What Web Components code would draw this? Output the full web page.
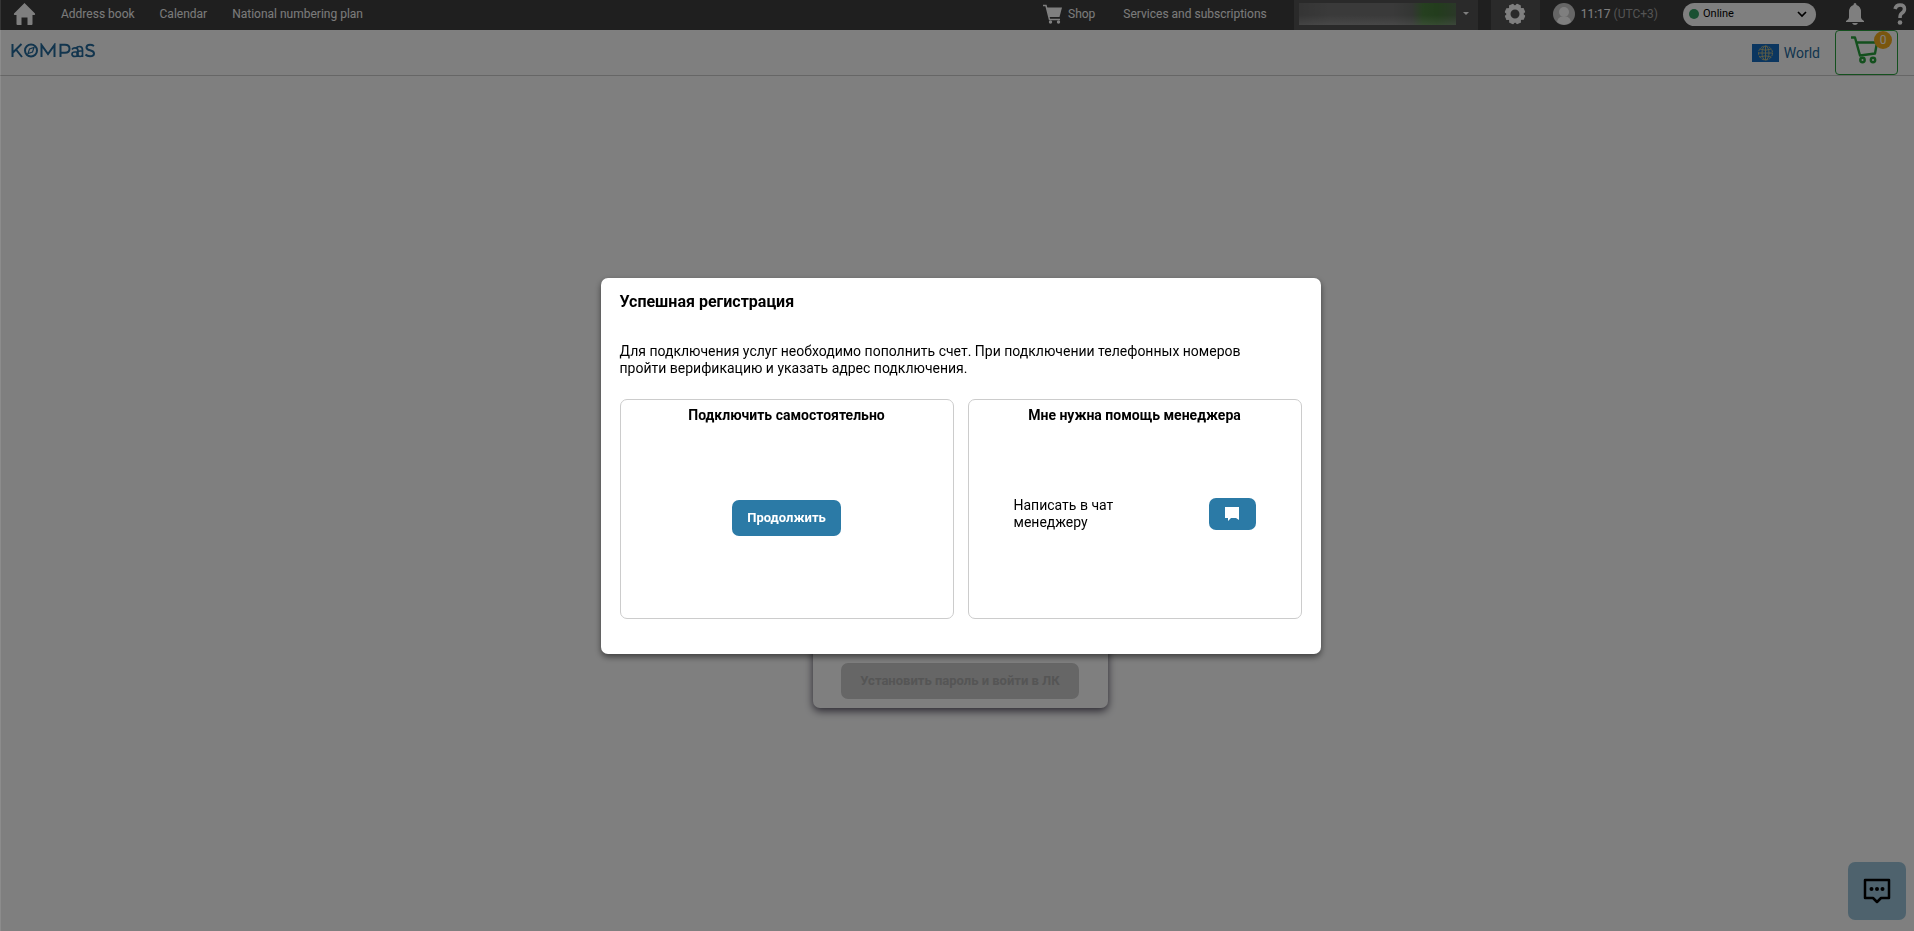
<!DOCTYPE html>
<html lang="ru">
<head>
<meta charset="utf-8">
<title>KOMPaaS</title>
<style>
    html, body { height: 100%; }

    body {
        margin: 0;
        background: #fff;
        font-family: Roboto, "Liberation Sans", sans-serif;
        font-size: 14px;
        color: #000;
        overflow: hidden;
    }
</style>
</head>
<body>
<kompaas-app></kompaas-app>

<script>
// Dark bar on top: links, account, status
class TopBar extends HTMLElement {
    constructor() {
        super();
        this.attachShadow({ mode: 'open' });
    }

    connectedCallback() {
        this.shadowRoot.innerHTML = `
            <style>
                :host {
                    display: flex;
                    justify-content: space-between;
                    height: 30px;
                    background: #3e3e3e;
                    color: #fff;
                    font-size: 12px;
                    line-height: 28px;
                }

                nav, .tools { display: flex; align-items: center; padding-bottom: 2px; }
                nav { padding-left: 13px; gap: 25px; }
                nav a:first-child { display: flex; }
                a { color: #f6f6f6; text-decoration: none; }
                svg { display: block; }

                .shop { display: flex; align-items: center; gap: 5px; margin-right: 28px; }
                .services { margin-right: 27px; }

                button {
                    border: 0;
                    padding: 0;
                    background: none;
                    color: #fff;
                    font: inherit;
                }

                .account, .settings {
                    display: flex;
                    align-items: center;
                    align-self: flex-start;
                    height: 30px;
                    margin-right: 13px;
                    background: #555;
                    box-sizing: border-box;
                }

                .account { gap: 7px; width: 184px; padding: 0 5px 2px; }
                .settings { justify-content: center; width: 49px; padding-bottom: 2px; }

                .balance {
                    width: 157px;
                    height: 22px;
                    background:
                        linear-gradient(0deg, rgba(255, 255, 255, .2), rgba(255, 255, 255, 0) 45%),
                        linear-gradient(90deg, #6a6a6a 0%, #757575 20%, #747474 60%, #686c68 72%, #4c8040 79%, #467a3a 88%, #557050 100%);
                }

                .user { display: flex; align-items: center; gap: 6px; margin-right: 25px; }
                .time span { color: #a8a8a8; }

                .status {
                    display: flex;
                    align-items: center;
                    gap: 4px;
                    width: 133px;
                    height: 23px;
                    padding: 0 9px 0 6px;
                    margin-right: 30px;
                    border-radius: 12px;
                    background: #fff;
                    box-sizing: border-box;
                }

                .dot { width: 10px; height: 10px; border-radius: 50%; background: #34a065; }

                select {
                    flex: 1;
                    appearance: none;
                    border: 0;
                    padding: 0;
                    background: none;
                    color: #000;
                    font: inherit;
                    font-size: 11px;
                }

                .bell { margin-right: 28px; }
            </style>

            <nav>
                <a href="#" aria-label="Home">
                    <svg width="23" height="24" viewBox="0 0 23 24" fill="#fff"><path d="M11.500 1 1 11.500Q.3 13 2 13H3.500V22Q3.500 23 4.500 23H8.500V15.500H14.500V23H18.500Q19.500 23 19.500 22V13H21Q22.700 13 22 11.500Z"/></svg>
                </a>
                <a href="#">Address book</a>
                <a href="#">Calendar</a>
                <a href="#">National numbering plan</a>
            </nav>
            <div class="tools">
                <a class="shop" href="#">
                    <svg width="21" height="20" viewBox="0 0 21 20"><path d="M1 1.500H4L7.500 15.500H18" fill="none" stroke="#fff" stroke-width="1.500"/><path d="M4.500 3.500H20L17.500 13H7Z" fill="#fff"/><circle cx="8.500" cy="18" r="1.700" fill="#fff"/><circle cx="16.500" cy="18" r="1.700" fill="#fff"/></svg>
                    Shop
                </a>
                <a class="services" href="#">Services and subscriptions</a>
                <button class="account" aria-label="Account">
                    <span class="balance"></span>
                    <svg width="6" height="4" viewBox="0 0 6 4"><path d="M0 0H6L3 3Z" fill="#fff"/></svg>
                </button>
                <button class="settings" aria-label="Settings">
                    <svg width="22" height="22" viewBox="-11 -11 22 22">
                        <g fill="#fff" stroke="#fff" stroke-linejoin="round" transform="rotate(22)">
                            <path d="M-2.800-7-1.800-9.700H1.800L2.800-7Z"/>
                            <path transform="rotate(45)" d="M-2.800-7-1.800-9.700H1.800L2.800-7Z"/>
                            <path transform="rotate(90)" d="M-2.800-7-1.800-9.700H1.800L2.800-7Z"/>
                            <path transform="rotate(135)" d="M-2.800-7-1.800-9.700H1.800L2.800-7Z"/>
                            <path transform="rotate(180)" d="M-2.800-7-1.800-9.700H1.800L2.800-7Z"/>
                            <path transform="rotate(225)" d="M-2.800-7-1.800-9.700H1.800L2.800-7Z"/>
                            <path transform="rotate(270)" d="M-2.800-7-1.800-9.700H1.800L2.800-7Z"/>
                            <path transform="rotate(315)" d="M-2.800-7-1.800-9.700H1.800L2.800-7Z"/>
                        </g>
                        <circle r="6.500" fill="none" stroke="#fff" stroke-width="4"/>
                    </svg>
                </button>
                <div class="user">
                    <svg width="22" height="22" viewBox="0 0 22 22"><circle cx="11" cy="11" r="11" fill="#ccc"/><circle cx="11" cy="9" r="5" fill="#fff"/><path d="M4 19Q5 14 9 13.500H13Q17 14 18 19Q11 24.500 4 19Z" fill="#fff"/></svg>
                    <div class="time">11:17 <span>(UTC+3)</span></div>
                </div>
                <label class="status">
                    <span class="dot"></span>
                    <select aria-label="Status"><option>Online</option></select>
                    <svg width="10" height="7" viewBox="0 0 10 7"><path d="M1 1 5 5 9 1" fill="none" stroke="#000" stroke-width="1.700"/></svg>
                </label>
                <button class="bell" aria-label="Notifications">
                    <svg width="18" height="22" viewBox="0 0 18 22" fill="#fff"><path d="M9 0Q10.500 0 10.500 2Q15 3.500 15 9V14.500Q15 16 18 18V19H0V18Q3 16 3 14.500V9Q3 3.500 7.500 2Q7.500 0 9 0ZM6 20H12Q11 22 9 22Q7 22 6 20Z"/></svg>
                </button>
                <button class="help" aria-label="Help">
                    <svg width="22" height="22" viewBox="0 0 22 22"><path d="M3 6Q4 2 8 2Q12.500 2 12.500 6Q12.500 8.500 9.500 10.500Q8 11.500 8 15" fill="none" stroke="#fff" stroke-width="3.500"/><circle cx="8" cy="19.500" r="2.300" fill="#fff"/></svg>
                </button>
            </div>
        `;
    }
}

// White header with the logo, region and cart
class SiteHeader extends HTMLElement {
    constructor() {
        super();
        this.attachShadow({ mode: 'open' });
    }

    connectedCallback() {
        this.shadowRoot.innerHTML = `
            <style>
                :host {
                    display: flex;
                    justify-content: space-between;
                    height: 45px;
                    padding: 0 16px 0 11px;
                    border-bottom: 1px solid #ccc;
                    color: #256a9c;
                }

                a { color: inherit; text-decoration: none; }
                svg { display: block; }
                .logo { padding-top: 13px; }
                .side { display: flex; gap: 15px; }

                .region {
                    display: flex;
                    align-items: center;
                    gap: 5px;
                    font-size: 14px;
                }

                .cart {
                    position: relative;
                    display: flex;
                    align-items: flex-start;
                    width: 63px;
                    height: 45px;
                    padding: 5px 0 0 15px;
                    border: 1px solid #28a03c;
                    border-radius: 4px;
                    background: none;
                    box-sizing: border-box;
                }

                .badge {
                    position: absolute;
                    top: 0;
                    right: 5px;
                    width: 18px;
                    height: 18px;
                    border-radius: 50%;
                    background: #f5ad1c;
                    color: #fff;
                    font: 12px/18px Roboto, "Liberation Sans", sans-serif;
                    text-align: center;
                }
            </style>

            <a class="logo" href="#" aria-label="KOMPaaS">
                <svg width="85" height="16" viewBox="0 0 85 16" fill="none" stroke="#256a9c" stroke-width="2">
                    <path d="M1.500 1V14M10.500 1 2 9.500M5 6.500 11 14"/>
                    <circle cx="20" cy="7.500" r="6"/>
                    <path d="M23 4.500 21.500 9 17 10.500 18.500 6Z" stroke-width="1.200"/>
                    <path d="M30.500 14V2L37 11 43.500 2V14"/>
                    <path d="M49.500 14V1.800H54Q58.500 1.800 58.500 5.800T54 9.800H49.500"/>
                    <path d="M61 6.500Q62 4.800 64 4.800Q67 4.800 67 8V14M67 9H64Q61 9 61 11.200T64 13.500Q66 13.500 67 12M65 5.500Q66 3.500 68.500 3.500Q71.500 3.500 71.500 7V14M71 8H69Q66 8 66 10.500T69 13.500Q71 13.500 71.500 12" stroke-width="1.700"/>
                    <path d="M83 3Q81 1.700 79 1.700Q75.500 1.700 75.500 4.500Q75.500 6.500 79 7.300Q83 8.200 83 10.500Q83 13.300 79 13.300Q76 13.300 74.500 11.500"/>
                </svg>
            </a>
            <div class="side">
                <a class="region" href="#">
                    <svg width="27" height="18" viewBox="0 0 27 18"><path d="M0 0H27V18H0Z" fill="#166cc0"/><g fill="none" stroke="#b9b98a"><circle cx="13.500" cy="9" r="7" stroke-dasharray="3 1"/><ellipse cx="13.500" cy="9" rx="3.500" ry="7"/><path d="M13.500 2V16M6.500 9H20.500M8 5Q13.500 7.500 19 5M8 13Q13.500 10.500 19 13"/></g></svg>
                    World
                </a>
                <button class="cart" aria-label="Cart">
                    <svg width="28" height="28" viewBox="0 0 28 28" fill="none" stroke="#28a03c" stroke-width="2.400"><path d="M0 1.500H4L9 19.500 24 17.500 26 6.500H5.500" stroke-linejoin="round"/><circle cx="11.500" cy="24" r="2.200"/><circle cx="22" cy="24" r="2.200"/></svg>
                    <span class="badge">0</span>
                </button>
            </div>
        `;
    }
}

// Button in the brand colour; grey while disabled
class AppButton extends HTMLElement {
    constructor() {
        super();
        this.attachShadow({ mode: 'open' });
    }

    connectedCallback() {
        const disabled = this.hasAttribute('disabled') ? 'disabled' : '';
        const label = this.getAttribute('label');
        this.shadowRoot.innerHTML = `
            <style>
                :host { display: block; }

                button {
                    display: flex;
                    align-items: center;
                    justify-content: center;
                    width: 100%;
                    height: var(--button-height, 36px);
                    padding: 0 15px;
                    border: 0;
                    border-radius: 7px;
                    background: #2b7aa6;
                    color: #fff;
                    font: 700 13px Roboto, "Liberation Sans", sans-serif;
                }

                button:disabled { background: #ccc; color: #aaa; }
            </style>
            <button ${disabled} ${label ? `aria-label="${label}"` : ''}><slot></slot></button>
        `;
    }
}

// Outlined card with a centered title
class ChoiceCard extends HTMLElement {
    constructor() {
        super();
        this.attachShadow({ mode: 'open' });
    }

    connectedCallback() {
        this.shadowRoot.innerHTML = `
            <style>
                :host {
                    display: flex;
                    flex: 1;
                    flex-direction: column;
                    height: 220px;
                    padding: 7px 16px;
                    border: 1px solid #ccc;
                    border-radius: 7px;
                    box-sizing: border-box;
                }

                h3 {
                    margin: 0;
                    font-size: 14px;
                    line-height: 17px;
                    text-align: center;
                }

                .body {
                    flex: 1;
                    display: flex;
                    align-items: center;
                    justify-content: center;
                }
            </style>
            <h3><slot name="title"></slot></h3>
            <div class="body"><slot></slot></div>
        `;
    }
}

// Modal window over the dimmed page
class ModalDialog extends HTMLElement {
    constructor() {
        super();
        this.attachShadow({ mode: 'open' });
    }

    connectedCallback() {
        this.shadowRoot.innerHTML = `
            <style>
                :host {
                    position: fixed;
                    inset: 0;
                    display: flex;
                    align-items: center;
                    justify-content: center;
                    padding: 1px 0 0 6px;
                    border-left: 1px solid rgba(255, 255, 255, .1);
                    background: rgba(0, 0, 0, .5);
                }

                .window {
                    width: 720px;
                    padding: 13px 19px 35px;
                    border-radius: 7px;
                    background: #fff;
                    box-shadow: 0 3px 6px rgba(0, 0, 0, .5);
                    box-sizing: border-box;
                }

                h2 {
                    margin: 0 0 31px;
                    font-size: 16px;
                    line-height: 21px;
                }
            </style>
            <div class="window" role="dialog" aria-modal="true" aria-labelledby="title">
                <h2 id="title"><slot name="title"></slot></h2>
                <slot></slot>
            </div>
        `;
    }
}

class KompaasApp extends HTMLElement {
    constructor() {
        super();
        this.attachShadow({ mode: 'open' });
    }

    connectedCallback() {
        this.shadowRoot.innerHTML = `
            <style>
                :host {
                    display: flex;
                    flex-direction: column;
                    height: 100%;
                }

                main {
                    flex: 1;
                    display: flex;
                    align-items: center;
                    justify-content: center;
                    padding-left: 7px;
                }

                .login {
                    display: flex;
                    flex-direction: column;
                    justify-content: flex-end;
                    width: 295px;
                    height: 324px;
                    padding: 0 29px 9px 28px;
                    margin-top: 84px;
                    border-radius: 7px;
                    background: #fff;
                    box-shadow: 0 3px 8px #555060;
                    box-sizing: border-box;
                }

                .chat {
                    position: fixed;
                    right: 8px;
                    bottom: 11px;
                    display: flex;
                    align-items: center;
                    justify-content: center;
                    width: 58px;
                    height: 58px;
                    padding: 0;
                    border: 0;
                    border-radius: 7px;
                    background: #9cc5db;
                }

                p { margin: 0 0 22px; padding-right: 24px; line-height: 17px; }
                .cards { display: flex; gap: 14px; }

                .manager {
                    flex: 1;
                    display: flex;
                    align-items: center;
                    justify-content: space-between;
                    padding: 0 29px;
                    margin-bottom: 8px;
                    line-height: 17px;
                }

                .manager span { width: 130px; }
                .manager app-button { width: 47px; --button-height: 32px; }
            </style>

            <top-bar></top-bar>
            <site-header></site-header>
            <main>
                <div class="login">
                    <app-button disabled>Установить пароль и войти в ЛК</app-button>
                </div>
            </main>
            <button class="chat" aria-label="Chat">
                <svg width="28" height="26" viewBox="0 0 28 26"><path d="M2 2H26V20H18L14 24 10 20H2Z" fill="none" stroke="#000" stroke-width="2.500" stroke-linejoin="round"/><circle cx="8.500" cy="11" r="2"/><circle cx="14" cy="11" r="2"/><circle cx="19.500" cy="11" r="2"/></svg>
            </button>

            <modal-dialog>
                <span slot="title">Успешная регистрация</span>
                <p>Для подключения услуг необходимо пополнить счет. При подключении телефонных номеров пройти верификацию и указать адрес подключения.</p>
                <div class="cards">
                    <choice-card>
                        <span slot="title">Подключить самостоятельно</span>
                        <app-button>Продолжить</app-button>
                    </choice-card>
                    <choice-card>
                        <span slot="title">Мне нужна помощь менеджера</span>
                        <div class="manager">
                            <span>Написать в чат менеджеру</span>
                            <app-button label="Чат">
                                <svg width="14" height="14" viewBox="0 0 14 14" fill="#fff"><path d="M0 0H14V13L11 11H6L3 14V11H0Z"/></svg>
                            </app-button>
                        </div>
                    </choice-card>
                </div>
            </modal-dialog>
        `;
    }
}

customElements.define('top-bar', TopBar);
customElements.define('site-header', SiteHeader);
customElements.define('app-button', AppButton);
customElements.define('choice-card', ChoiceCard);
customElements.define('modal-dialog', ModalDialog);
customElements.define('kompaas-app', KompaasApp);
</script>
</body>
</html>
